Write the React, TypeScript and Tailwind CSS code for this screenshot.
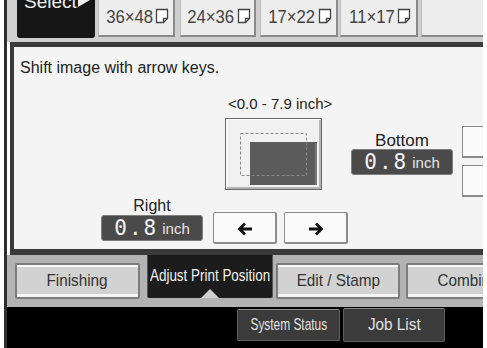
import React from "react"

function PaperIcon() {
   return (
      <svg width="14" height="16" viewBox="0 0 14 16">
         <path d="M1.5 1.5 H12.5 V10.5 L8.5 14.5 H1.5 Z" fill="#fff" stroke="#444" strokeWidth="1.3" />
         <path d="M12.5 10.5 H8.5 V14.5" fill="none" stroke="#444" strokeWidth="1.3" />
      </svg>
   )
}

function SizeButton({ label, ml, w }: { label: string; ml: string; w: string }) {
   return (
      <div className={`${ml} ${w} h-[37px] shrink-0 bg-[#ededed] border-l border-l-[#bdbdbd] border-r-2 border-b-2 border-r-[#8a8a8a] border-b-[#8a8a8a] flex items-center justify-center gap-[2px] pb-[3px] text-[#444]`}>
         <span className="text-[19px] leading-none scale-x-[0.88] -mr-[3px]">{label}</span>
         <PaperIcon />
      </div>
   )
}

function ValueBox() {
   return (
      <div className="h-[26px] w-[102px] rounded-[3px] bg-[#4a4a4a] border border-[#7d7d7d] flex items-center justify-center gap-[4px]">
         <span className="font-['DejaVu_Sans_Mono',monospace] text-[21px] leading-none tracking-[2px] text-[#f2f2f2]">0.8</span>
         <span className="text-[15px] text-[#e4e4e4] leading-none">inch</span>
      </div>
   )
}

function Arrow({ dir }: { dir: "left" | "right" }) {
   return (
      <svg width="18" height="16" viewBox="0 0 18 16">
         {dir === "left" ? (
            <path d="M16 8 H3.5 M9 2.5 L3.5 8 L9 13.5" fill="none" stroke="#111" strokeWidth="2.8" />
         ) : (
            <path d="M2 8 H14.5 M9 2.5 L14.5 8 L9 13.5" fill="none" stroke="#111" strokeWidth="2.8" />
         )}
      </svg>
   )
}

function LightTab({ label, ml, w }: { label: string; ml: string; w: string }) {
   return (
      <div className={`${ml} ${w} mt-[8px] h-[36px] shrink-0 rounded-[2px] border-2 border-[#7c7c7c] bg-[#d2d2d2] shadow-[inset_0_2px_0_#fbfbfb,inset_0_-3px_0_#f4f4f4] flex items-center justify-center text-[#333] whitespace-nowrap`}>
         <span className="text-[17px] scale-x-[0.9]">{label}</span>
      </div>
   )
}

export default function App() {
   return (
      <div className="w-[487px] h-[348px] bg-white pl-[4px] pr-[4px] overflow-hidden font-['Liberation_Sans',Arial,sans-serif]">
         <div className="h-full flex flex-col border-l-[3px] border-[#2e2e2e] overflow-hidden">
            {/* top row: paper sizes */}
            <div className="h-[42px] shrink-0 bg-[#cfcfcf] flex items-start pl-[10px]">
               <div className="w-[78px] h-[38px] shrink-0 bg-[#161616] rounded-b-[3px] overflow-hidden pl-[7px] flex items-start">
                  <span className="-mt-[8px] text-[19px] leading-[19px] text-[#f0f0f0]">Select</span>
                  <svg width="12" height="10" viewBox="0 0 12 10" className="mt-[0px] ml-[1px]">
                     <polygon points="0,0 12,0 0,7" fill="#f0f0f0" />
                  </svg>
               </div>
               <SizeButton label="36×48" ml="ml-[3px]" w="w-[77px]" />
               <SizeButton label="24×36" ml="ml-[5px]" w="w-[76px]" />
               <SizeButton label="17×22" ml="ml-[4px]" w="w-[78px]" />
               <SizeButton label="11×17" ml="ml-[2px]" w="w-[78px]" />
               <div className="ml-[3px] w-[78px] h-[37px] shrink-0 bg-[#ededed] border-l border-l-[#bdbdbd] border-b-2 border-b-[#8a8a8a]" />
            </div>

            {/* main panel */}
            <div className="ml-[3px] h-[213px] shrink-0 border-l-4 border-t-[5px] border-b-[6px] border-[#3a3a3a] bg-[#f4f4f4] overflow-hidden">
               <p className="pl-[6px] pt-[11px] text-[16px] leading-[20px] text-[#222]">Shift image with arrow keys.</p>

               <div className="mt-[17px] h-[102px] flex items-start">
                  <div className="ml-[211px] w-[97px] shrink-0 flex flex-col">
                     <div className="pl-[3px] h-[18px] text-[15px] leading-[18px] whitespace-nowrap text-[#222]">&lt;0.0 - 7.9 inch&gt;</div>
                     <div className="mt-[5px] h-[72px] w-[97px] border border-[#6a6a6a] bg-[#f1f1f1] shadow-[inset_1px_1px_0_#fff,inset_-2px_-2px_0_#b4b4b4]">
                        <svg width="95" height="70" viewBox="0 0 95 70">
                           <rect x="24" y="23" width="67" height="43" fill="#5b5b5b" />
                           <rect x="89" y="24" width="2" height="42" fill="#777" />
                           <rect x="14.5" y="14.5" width="66" height="42" fill="none" stroke="#8a8a8a" strokeWidth="1" strokeDasharray="3 2" />
                        </svg>
                     </div>
                  </div>

                  <div className="ml-[29px] w-[102px] shrink-0 pt-[37px] flex flex-col">
                     <div className="h-[17px] text-[17px] leading-[17px] text-center text-[#222]">Bottom</div>
                     <ValueBox />
                  </div>

                  <div className="ml-[9px] w-[30px] shrink-0 pt-[31px] flex flex-col gap-[7px]">
                     <div className="h-[32px] border border-[#8a8a8a] border-b-2 bg-[#fafafa]" />
                     <div className="h-[32px] border border-[#8a8a8a] border-b-2 bg-[#fafafa]" />
                  </div>
               </div>

               <div className="flex items-start">
                  <div className="ml-[87px] w-[102px] shrink-0 flex flex-col">
                     <div className="h-[17px] text-[16px] leading-[17px] text-center text-[#222]">Right</div>
                     <div className="mt-[1px]">
                        <ValueBox />
                     </div>
                  </div>
                  <div className="ml-[10px] mt-[15px] w-[64px] h-[32px] shrink-0 rounded-[2px] border border-[#8c8c8c] border-b-2 border-r-2 bg-[#fafafa] flex items-center justify-center pt-[2px]">
                     <Arrow dir="left" />
                  </div>
                  <div className="ml-[7px] mt-[15px] w-[64px] h-[32px] shrink-0 rounded-[2px] border border-[#8c8c8c] border-b-2 border-r-2 bg-[#fafafa] flex items-center justify-center pt-[2px]">
                     <Arrow dir="right" />
                  </div>
               </div>
            </div>

            {/* tabs */}
            <div className="h-[52px] shrink-0 bg-[#b3b3b3] flex items-start">
               <LightTab label="Finishing" ml="ml-[8px]" w="w-[125px]" />
               <div className="ml-[7px] w-[126px] h-[43px] shrink-0 bg-[#1c1c1c] rounded-b-[2px] border-x border-[#555] flex flex-col items-center">
                  <div className="mt-[10px] h-[21px] text-[17px] leading-[21px] text-[#f2f2f2] whitespace-nowrap scale-x-[0.79]">Adjust Print Position</div>
                  <svg width="18" height="9" viewBox="0 0 18 9" className="mt-[3px]">
                     <polygon points="9,0 18,9 0,9" fill="#cfcfcf" />
                  </svg>
               </div>
               <LightTab label="Edit / Stamp" ml="ml-[3px]" w="w-[124px]" />
               <LightTab label="Combine" ml="ml-[6px]" w="w-[125px]" />
            </div>

            {/* status bar */}
            <div className="flex-1 bg-black flex items-start">
               <div className="ml-[230px] mt-[2px] w-[103px] h-[32px] shrink-0 rounded-[2px] bg-[#3b3b3b] border border-[#5e5e5e] border-t-[#8a8a8a] flex items-center justify-center">
                  <span className="text-[17px] text-[#e2e2e2] whitespace-nowrap scale-x-[0.7]">System Status</span>
               </div>
               <div className="ml-[3px] mt-[1px] w-[102px] h-[34px] shrink-0 rounded-[2px] bg-[#3b3b3b] border border-[#5e5e5e] border-t-[#8a8a8a] flex items-center justify-center">
                  <span className="text-[17px] text-[#e2e2e2] whitespace-nowrap scale-x-[0.9]">Job List</span>
               </div>
            </div>
         </div>
      </div>
   )
}
